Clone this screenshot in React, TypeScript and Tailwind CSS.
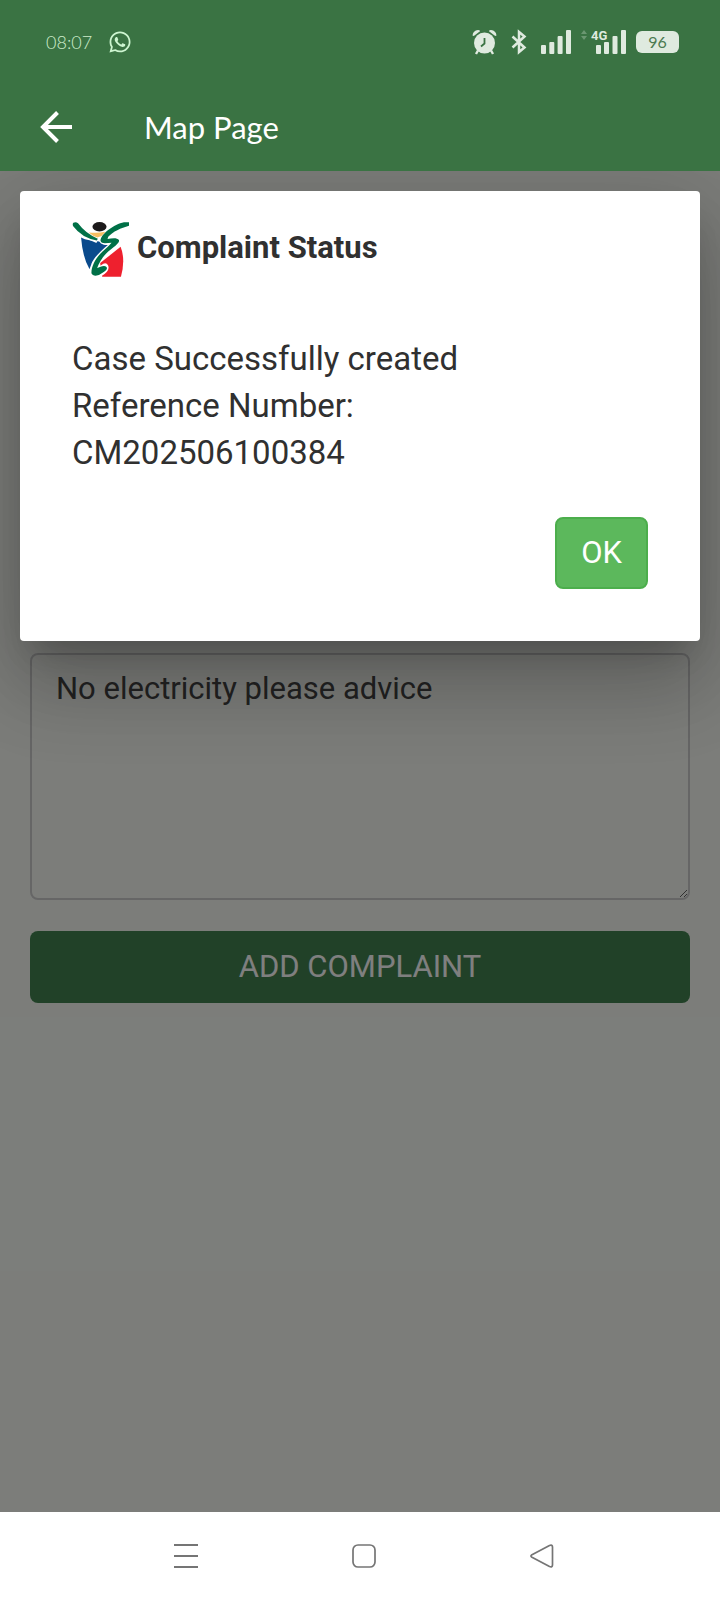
import { FaWhatsapp } from 'react-icons/fa';

function AlarmIcon() {
  return (
    <svg viewBox="0 0 25 26" className="h-[26px] w-[25px]" fill="none">
      <path d="M0.500 6.500 Q1 1.500 6 1 Q8 1 8 2.200 L1.800 7 Z" fill="#dfeadf" />
      <path d="M24.500 6.500 Q24 1.500 19 1 Q17 1 17 2.200 L23.200 7 Z" fill="#dfeadf" />
      <path d="M6 21.500 L4 25 M19 21.500 L21 25" stroke="#dfeadf" strokeWidth="2.400" />
      <circle cx="12.500" cy="14" r="10.500" fill="#dfeadf" />
      <path d="M12.500 9 V14.500 L9 17.500" stroke="#3a7343" strokeWidth="1.800" />
    </svg>
  );
}

function BluetoothIcon() {
  return (
    <svg viewBox="0 0 16 26" className="mx-1 h-[26px] w-4" fill="none" stroke="#dfeadf" strokeWidth="2.500">
      <path d="M1.500 7.500 L13.500 18.500 L8 23 V3 L13.500 7.500 L1.500 18.500" />
    </svg>
  );
}

function SignalIcon() {
  return (
    <svg viewBox="0 0 30 24" className="h-6 w-[30px]" fill="#dfeadf">
      <rect x="0" y="15" width="5" height="9" rx="1" />
      <rect x="8.300" y="12" width="5" height="12" rx="1" />
      <rect x="16.600" y="6" width="5" height="18" rx="1" />
      <rect x="25" y="0" width="5" height="24" rx="1" />
    </svg>
  );
}

function MobileDataIcon() {
  return (
    <svg viewBox="0 -8 45 40" className="h-10 w-[45px]" fill="#dfeadf">
      <path d="M0 4 L3 0 L6 4 Z M0 6 L3 10 L6 6 Z" opacity="0.3" />
      <text x="10" y="10" fontFamily="Roboto, sans-serif" fontWeight="700" fontSize="13">4G</text>
      <rect x="15" y="15" width="5" height="9" rx="1" />
      <rect x="23" y="12" width="5" height="12" rx="1" />
      <rect x="31.500" y="6" width="5" height="18" rx="1" />
      <rect x="40" y="0" width="5" height="24" rx="1" />
    </svg>
  );
}

function Logo() {
  return (
    <svg viewBox="36 38 170 164" className="h-[55px] w-[57px]" fill="none">
      <path d="M63 84 Q84 95 122 96 L146 108 L125 140 L88 178 Q68 145 63 84 Z" fill="#0a4a8c" />
      <path d="M181 112 Q196 150 182 201 L126 201 L120 160 Z" fill="#ee202e" />
      <path
        d="M201 44 C176 48 141 66 128 84 C120 100 142 96 172 94 C158 110 112 140 104 166 C92 192 101 198 116 192 C130 184 136 176 134 172 L116 184"
        stroke="#fff"
        strokeWidth="21"
        strokeLinejoin="round"
      />
      <path d="M45 45 C62 66 84 82 112 92" stroke="#fff" strokeWidth="18" />
      <path d="M86 69 Q112 72 136 67 L124 80 L112 84 Q98 80 86 69 Z" fill="#f6be62" />
      <path d="M40 40 Q48 36 54 42 Q76 72 113 88 L110 93 Q66 86 39 50 Q37 43 40 40 Z" fill="#007047" />
      <path
        d="M206 39 L206 49 C182 56 158 66 144 82 L142 89 C154 87 170 84 176 92 C179 101 160 113 144 126 C128 140 118 158 111 175 C120 172 132 165 139 172 C144 181 132 186 120 194 C109 201 97 199 94 191 C93 171 107 144 127 126 C137 117 148 108 154 100 C140 100 124 105 121 94 C121 75 162 44 191 39 Z"
        fill="#007047"
      />
      <ellipse cx="118" cy="52" rx="21" ry="14" fill="#1c1a1b" />
    </svg>
  );
}

function StatusBar() {
  return (
    <div className="flex h-[84px] items-center justify-between pr-[41px] pl-[46px]">
      <div className="flex items-center gap-4">
        <span className="font-[Lato,sans-serif] text-lg font-light text-[#cdeccb]">08:07</span>
        <FaWhatsapp className="size-6 text-[#cdf5d0]" />
      </div>
      <div className="flex items-center gap-[10px]">
        <AlarmIcon />
        <BluetoothIcon />
        <SignalIcon />
        <MobileDataIcon />
        <div className="flex h-[22px] w-[43px] items-center justify-center rounded-md bg-[#dfeadf] font-[Lato,sans-serif] text-base text-[#4b7a50]">
          96
        </div>
      </div>
    </div>
  );
}

function AppBar() {
  return (
    <div className="flex h-[87px] items-center gap-[72px] pb-[2px] pl-10">
      <button type="button" aria-label="Back">
        <svg viewBox="0 0 32 32" className="size-8" fill="none" stroke="#fff" strokeWidth="4">
          <path d="M17.500 1.500 L3 16 L17.500 30.500 M2 16 H32" />
        </svg>
      </button>
      <h1 className="font-[Lato,sans-serif] text-[31px] leading-10 text-white">Map Page</h1>
    </div>
  );
}

function StatusDialog() {
  return (
    <div
      role="dialog"
      aria-labelledby="dialog-title"
      className="rounded bg-white px-[52px] pt-[31px] pb-[52px] shadow-[0_22px_30px_-14px_rgba(0,0,0,0.2),0_48px_76px_6px_rgba(0,0,0,0.14),0_18px_92px_16px_rgba(0,0,0,0.12)]"
    >
      <div className="flex items-start gap-2">
        <Logo />
        <h2 id="dialog-title" className="text-[31px] leading-[51px] font-bold">Complaint Status</h2>
      </div>
      <p className="mt-[58px] text-[33px] leading-[47px]">
        Case Successfully created
        <br />
        Reference Number:
        <br />
        CM202506100384
      </p>
      <div className="mt-[41px] flex justify-end">
        <button
          type="button"
          className="h-[72px] rounded-lg border-2 border-[#4cae4c] bg-[#5cb85c] px-6 text-[31px] text-white"
        >
          OK
        </button>
      </div>
    </div>
  );
}

function NavBar() {
  return (
    <nav className="grid h-[88px] grid-cols-3 items-center justify-items-center bg-white pr-[89px] pl-[97px]">
      <button type="button" aria-label="Recent apps">
        <svg viewBox="0 0 24 24" className="size-6" stroke="#757575" strokeWidth="2">
          <path d="M0 1 H24 M0 12 H24 M0 23 H24" />
        </svg>
      </button>
      <button type="button" aria-label="Home">
        <svg viewBox="0 0 24 24" className="size-6" fill="none" stroke="#757575" strokeWidth="1.700">
          <rect x="1" y="1" width="22" height="22" rx="5" />
        </svg>
      </button>
      <button type="button" aria-label="Back">
        <svg viewBox="0 0 24 24" className="size-6" fill="none" stroke="#757575" strokeWidth="1.700" strokeLinejoin="round">
          <path d="M1.500 11 L19.500 1.500 Q22.500 0.500 22.500 3 V21 Q22.500 23.500 19.500 22.500 L1.500 13 Q0.500 12 1.500 11 Z" />
        </svg>
      </button>
    </nav>
  );
}

export default function App() {
  return (
    <div className="flex min-h-screen flex-col font-[Roboto,sans-serif] text-[#303030]">
      <header className="bg-[#3a7343]">
        <StatusBar />
        <AppBar />
      </header>

      <main className="relative flex-1 overflow-hidden bg-[#f8fbf5]">
        <form className="flex flex-col gap-[31px] px-[30px] pt-[482px] pb-8">
          <textarea
            aria-label="Complaint"
            defaultValue="No electricity please advice"
            className="block h-[247px] w-full rounded-lg border-2 border-[#cccccc] px-6 py-3 text-[31px] leading-[43px] text-[#444444]"
          />
          <button type="button" className="h-[72px] rounded-lg bg-[#428250] text-[31px] text-white">
            ADD COMPLAINT
          </button>
        </form>

        {/* Backdrop */}
        <div className="absolute inset-0 bg-black/50 p-5">
          <StatusDialog />
        </div>
      </main>

      <NavBar />
    </div>
  );
}
